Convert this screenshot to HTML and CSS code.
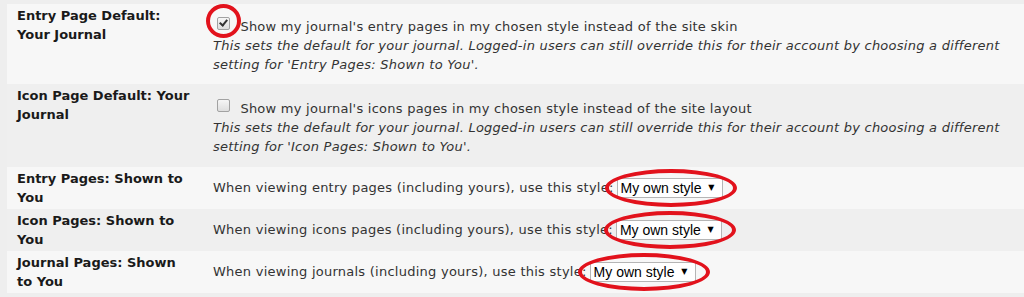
FILE: index.html
```html
<!DOCTYPE html>
<html lang="en">
<head>
    <meta charset="UTF-8">
    <title>Display Settings</title>
    <link rel="stylesheet" href="styles.css">
</head>
<body>
    <div class="settings">
        <div class="row light">
            <div class="label">Entry Page Default: Your Journal</div>
            <div class="field">
                <label class="check-line">
                    <span class="mark"><input type="checkbox" checked></span>
                    Show my journal's entry pages in my chosen style instead of the site skin
                </label>
                <div class="note">This sets the default for your journal. Logged-in users can still override this for their account by choosing a different setting for 'Entry Pages: Shown to You'.</div>
            </div>
        </div>
        <div class="row dark roomy">
            <div class="label">Icon Page Default: Your Journal</div>
            <div class="field">
                <label class="check-line">
                    <input type="checkbox">
                    Show my journal's icons pages in my chosen style instead of the site layout
                </label>
                <div class="note">This sets the default for your journal. Logged-in users can still override this for their account by choosing a different setting for 'Icon Pages: Shown to You'.</div>
            </div>
        </div>
        <div class="row light short">
            <div class="label">Entry Pages: Shown to You</div>
            <div class="field">
                When viewing entry pages (including yours), use this style:<span class="pick"><select><option>My own style</option></select></span>
            </div>
        </div>
        <div class="row dark short">
            <div class="label">Icon Pages: Shown to You</div>
            <div class="field">
                When viewing icons pages (including yours), use this style:<span class="pick"><select><option>My own style</option></select></span>
            </div>
        </div>
        <div class="row light short">
            <div class="label">Journal Pages: Shown to You</div>
            <div class="field">
                When viewing journals (including yours), use this style:<span class="pick"><select><option>My own style</option></select></span>
            </div>
        </div>
    </div>
</body>
</html>
```

FILE: styles.css
```css
html { box-sizing: border-box; }
*, *::before, *::after { box-sizing: inherit; }
body {
    margin: 0;
    background: #eeeeee;
    color: #333;
    font-family: 'DejaVu Sans', Verdana, sans-serif;
    font-size: 13px;
    line-height: 19px;
}
.settings {
    margin: 4px 0 0 7px;
}
.row {
    display: grid;
    grid-template-columns: 196px 1fr;
    align-items: center;
    min-height: 80px;
}
.row.roomy {
    min-height: 83px;
}
.row.short {
    min-height: 42px;
}
.light { background: #f7f7f7; }
.dark { background: #efefef; }
.label {
    align-self: start;
    padding: 2px 11px 2px 10px;
    font-weight: bold;
    color: #1a1a1a;
}
.field {
    padding: 2px 0 2px 10px;
    letter-spacing: 0.25px;
}
.check-line {
    display: block;
}
.note {
    font-style: italic;
}
input[type=checkbox] {
    appearance: none;
    width: 13px;
    height: 13px;
    margin: 3px 6px 3px 4px;
    vertical-align: -2px;
    border: 1px solid #a2a2a2;
    border-radius: 2px;
    background: linear-gradient(#f6f6f6, #dedede);
    position: relative;
}
input[type=checkbox]:checked::before {
    content: "";
    position: absolute;
    left: 3px;
    top: 0px;
    width: 5px;
    height: 8px;
    border-right: 2px solid #333;
    border-bottom: 2px solid #333;
    transform: rotate(40deg);
}
.mark, .pick {
    position: relative;
    display: inline-block;
}
.mark::after {
    content: "";
    position: absolute;
    left: -7px;
    right: -5px;
    top: -10px;
    bottom: -2px;
    border: 4px solid #e2121c;
    border-radius: 50%;
}
.pick {
    margin-left: 3px;
    vertical-align: middle;
}
.pick::before {
    content: "\25BC";
    position: absolute;
    right: 8px;
    top: 4px;
    font-size: 8px;
    line-height: 12px;
    color: #000;
    pointer-events: none;
}
.pick::after {
    content: "";
    position: absolute;
    left: -12px;
    right: -14px;
    top: -9px;
    bottom: -9px;
    border: 4px solid #e2121c;
    border-radius: 50%;
}
select {
    appearance: none;
    display: block;
    width: 106px;
    height: 20px;
    padding: 0 20px 0 3px;
    border: 1px solid #b5b5b5;
    border-radius: 0;
    background: #fff;
    font-family: 'Liberation Sans', Arial, sans-serif;
    font-size: 14px;
    letter-spacing: 0;
    color: #000;
}
```
